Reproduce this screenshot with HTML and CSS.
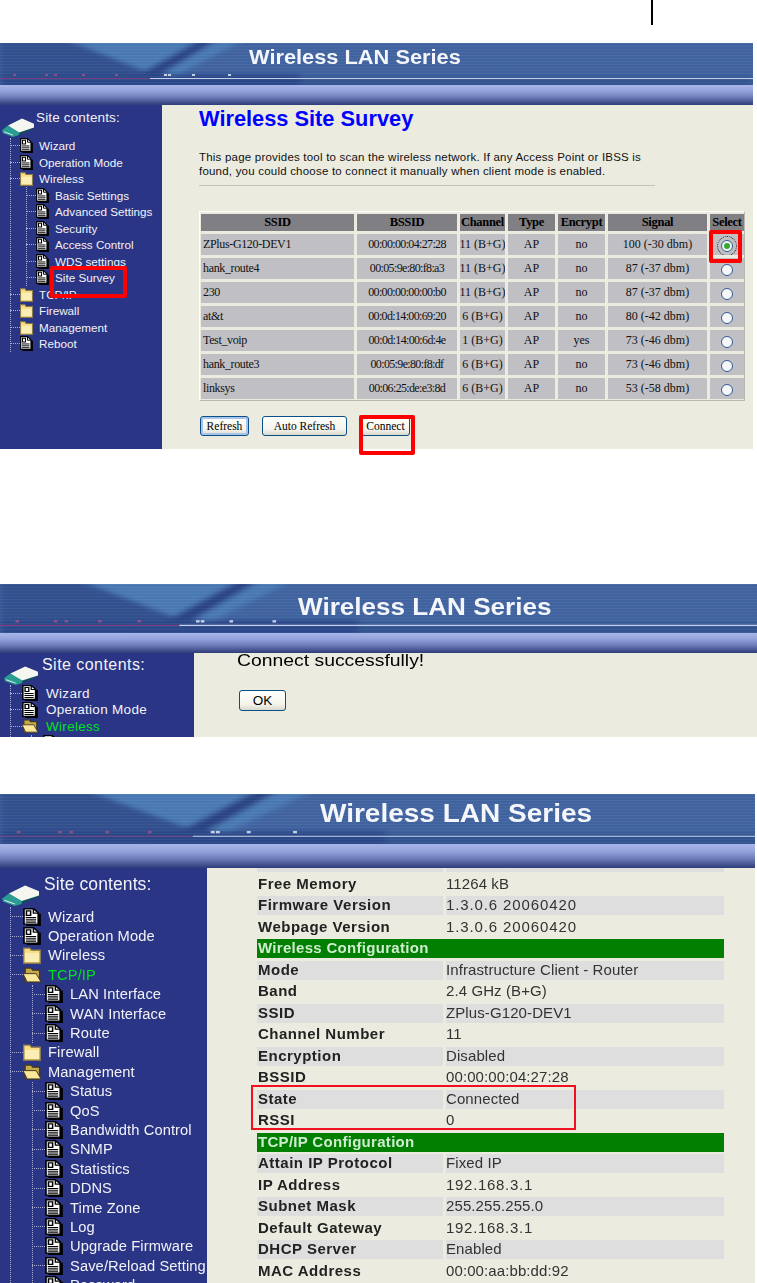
FILE: index.html
```html
<!DOCTYPE html>
<html>
<head>
    <meta charset="UTF-8">
    <meta name="viewport" content="width=device-width, initial-scale=1.0">
    <title>Wireless LAN Series</title>
    <link rel="stylesheet" href="styles.css">
</head>
<body>
    <svg class="sprites" width="0" height="0">
        <filter id="soft" x="-10%" y="-10%" width="120%" height="120%"><feGaussianBlur stdDeviation="3 2"/></filter>
        <symbol id="streaks" viewBox="0 0 753 42" preserveAspectRatio="none">
            <rect width="753" height="42" fill="#40639f"/>
            <g filter="url(#soft)">
                <path d="M40 -6H250L170 36H0Z" fill="#4878b3"/>
                <path d="M0 -6H60L150 30L110 44H0Z" fill="#32508e"/>
                <path d="M205 -6L140 31L158 33L222 -6Z" fill="#2b4283"/>
                <path d="M0 31H300V44H0Z" fill="#2c4688"/>
                <path d="M300 33H753V44H300Z" fill="#33538f"/>
            </g>
            <path d="M0 35.500H150" stroke="#7a3f80" stroke-width="1"/>
            <path d="M150 35.500H753" stroke="#c3d0e8" stroke-width="1"/>
            <g fill="#c4d0e8">
                <rect x="164" y="31" width="3" height="2"/><rect x="168" y="31" width="3" height="2"/>
                <rect x="192" y="31" width="3" height="2"/><rect x="228" y="31" width="3" height="2"/>
            </g>
            <g fill="#8a4f86">
                <rect x="13" y="31" width="3" height="2"/><rect x="45" y="31" width="3" height="2"/>
                <rect x="54" y="31" width="3" height="2"/><rect x="82" y="31" width="3" height="2"/>
                <rect x="115" y="31" width="3" height="2"/>
            </g>
        </symbol>
        <symbol id="drive" viewBox="0 0 32 20" preserveAspectRatio="none">
            <path d="M11 20L17 18L32 11V8.500L15 15.500Z" fill="#0c4f58"/>
            <path d="M6 8L20 .500L32 6V10L15 16Z" fill="#f6f6f0"/>
            <path d="M0 13L6 8L17 15V18L11 20L1 16Z" fill="#2b9c92"/>
            <path d="M2 14.500L11 18" stroke="#d6ece6" stroke-width="1"/>
        </symbol>
        <symbol id="doc" viewBox="0 0 13 16" preserveAspectRatio="none">
            <path d="M12 5V15.400H2.500" fill="none" stroke="#000" stroke-width="1.800"/>
            <path d="M.700 .700H7.500L11 4.200V14.300H.700Z" fill="#fff" stroke="#000" stroke-width="1.200"/>
            <path d="M7.500 1V4.500H11" fill="none" stroke="#000"/>
            <path d="M2.500 2.500H5.500V6.500H2.500Z" fill="#fff" stroke="#000" stroke-width="1.100"/>
            <path d="M2 8.500H9.500M2 10.500H9.500M2 12.500H9.500" stroke="#000"/>
        </symbol>
        <symbol id="folder" viewBox="0 0 13 13" preserveAspectRatio="none">
            <path d="M0.500 3V1.500H5L6 3H12.500V12.500H0.500Z" fill="#f8dc80" stroke="#8a7a50"/>
            <path d="M1.500 5H11.500V11.500H1.500Z" fill="#fbeeb4"/>
        </symbol>
        <symbol id="folder-open" viewBox="0 0 13 13" preserveAspectRatio="none">
            <path d="M1.500 3V1.500H6L7 3H12V11.500H1.500Z" fill="#c7a94a" stroke="#3f3a20"/>
            <path d="M0 5.500H9.500L13 11.500H3Z" fill="#fbe79a" stroke="#3f3a20" stroke-width=".7"/>
        </symbol>
    </svg>

    <div class="page-rule"></div>

    <!-- site survey -->
    <section class="shot shot-a">
        <div class="banner">
            <svg class="streaks"><use href="#streaks"/></svg>
            <div class="banner-title">Wireless LAN Series</div>
        </div>
        <div class="bar"></div>
        <div class="shot-body">
            <aside class="side">
                <div class="side-head">
                    <svg class="drive"><use href="#drive"/></svg>
                    <span>Site contents:</span>
                </div>
                <ul class="tree">
                    <li><div class="node"><i class="twig"></i><svg class="ico"><use href="#doc"/></svg>Wizard</div></li>
                    <li><div class="node"><i class="twig"></i><svg class="ico"><use href="#doc"/></svg>Operation Mode</div></li>
                    <li><div class="node"><i class="twig"></i><svg class="ico"><use href="#folder"/></svg>Wireless</div>
                        <ul class="tree sub">
                            <li><div class="node"><i class="twig"></i><svg class="ico"><use href="#doc"/></svg>Basic Settings</div></li>
                            <li><div class="node"><i class="twig"></i><svg class="ico"><use href="#doc"/></svg>Advanced Settings</div></li>
                            <li><div class="node"><i class="twig"></i><svg class="ico"><use href="#doc"/></svg>Security</div></li>
                            <li><div class="node"><i class="twig"></i><svg class="ico"><use href="#doc"/></svg>Access Control</div></li>
                            <li><div class="node"><i class="twig"></i><svg class="ico"><use href="#doc"/></svg>WDS settings</div></li>
                            <li><div class="node"><i class="twig"></i><svg class="ico"><use href="#doc"/></svg>Site Survey</div></li>
                        </ul>
                    </li>
                    <li><div class="node"><i class="twig"></i><svg class="ico"><use href="#folder"/></svg>TCP/IP</div></li>
                    <li><div class="node"><i class="twig"></i><svg class="ico"><use href="#folder"/></svg>Firewall</div></li>
                    <li><div class="node"><i class="twig"></i><svg class="ico"><use href="#folder"/></svg>Management</div></li>
                    <li><div class="node"><i class="twig"></i><svg class="ico"><use href="#doc"/></svg>Reboot</div></li>
                </ul>
            </aside>
            <main class="main survey-main">
                <h1 class="survey-title">Wireless Site Survey</h1>
                <p class="survey-text">This page provides tool to scan the wireless network. If any Access Point or IBSS is<br>found, you could choose to connect it manually when client mode is enabled.</p>
                <div class="survey-rule"></div>
                <div class="survey">
                    <div class="th">SSID</div><div class="th">BSSID</div><div class="th">Channel</div><div class="th">Type</div><div class="th">Encrypt</div><div class="th">Signal</div><div class="th">Select</div>

                    <div class="td left">ZPlus-G120-DEV1</div><div class="td mac">00:00:00:04:27:28</div><div class="td">11 (B+G)</div><div class="td">AP</div><div class="td">no</div><div class="td">100 (-30 dbm)</div><div class="td"><span class="radio focus"><i class="radio-dot"></i></span></div>

                    <div class="td left">hank_route4</div><div class="td mac">00:05:9e:80:f8:a3</div><div class="td">11 (B+G)</div><div class="td">AP</div><div class="td">no</div><div class="td">87 (-37 dbm)</div><div class="td"><span class="radio"></span></div>

                    <div class="td left">230</div><div class="td mac">00:00:00:00:00:b0</div><div class="td">11 (B+G)</div><div class="td">AP</div><div class="td">no</div><div class="td">87 (-37 dbm)</div><div class="td"><span class="radio"></span></div>

                    <div class="td left">at&amp;t</div><div class="td mac">00:0d:14:00:69:20</div><div class="td">6 (B+G)</div><div class="td">AP</div><div class="td">no</div><div class="td">80 (-42 dbm)</div><div class="td"><span class="radio"></span></div>

                    <div class="td left">Test_voip</div><div class="td mac">00:0d:14:00:6d:4e</div><div class="td">1 (B+G)</div><div class="td">AP</div><div class="td">yes</div><div class="td">73 (-46 dbm)</div><div class="td"><span class="radio"></span></div>

                    <div class="td left">hank_route3</div><div class="td mac">00:05:9e:80:f8:df</div><div class="td">6 (B+G)</div><div class="td">AP</div><div class="td">no</div><div class="td">73 (-46 dbm)</div><div class="td"><span class="radio"></span></div>

                    <div class="td left">linksys</div><div class="td mac">00:06:25:de:e3:8d</div><div class="td">6 (B+G)</div><div class="td">AP</div><div class="td">no</div><div class="td">53 (-58 dbm)</div><div class="td"><span class="radio"></span></div>
                </div>
                <div class="survey-actions">
                    <button class="btn btn-refresh btn-default">Refresh</button>
                    <button class="btn btn-auto">Auto Refresh</button>
                    <button class="btn btn-connect">Connect</button>
                </div>
            </main>
        </div>
        <div class="mark mark-site"></div>
        <div class="mark mark-select"></div>
        <div class="mark mark-connect"></div>
    </section>

    <!-- connect ok -->
    <section class="shot shot-b">
        <div class="banner">
            <svg class="streaks"><use href="#streaks"/></svg>
            <div class="banner-title">Wireless LAN Series</div>
        </div>
        <div class="bar"></div>
        <div class="shot-body">
            <aside class="side">
                <div class="side-head">
                    <svg class="drive"><use href="#drive"/></svg>
                    <span>Site contents:</span>
                </div>
                <ul class="tree">
                    <li><div class="node"><i class="twig"></i><svg class="ico"><use href="#doc"/></svg>Wizard</div></li>
                    <li><div class="node"><i class="twig"></i><svg class="ico"><use href="#doc"/></svg>Operation Mode</div></li>
                    <li><div class="node active"><i class="twig"></i><svg class="ico"><use href="#folder-open"/></svg>Wireless</div>
                        <ul class="tree sub">
                            <li><div class="node"><i class="twig"></i><svg class="ico"><use href="#doc"/></svg></div></li>
                        </ul>
                    </li>
                </ul>
            </aside>
            <main class="main ok-main">
                <div class="ok-text">Connect successfully!</div>
                <button class="btn btn-ok">OK</button>
            </main>
        </div>
    </section>

    <!-- status page -->
    <section class="shot shot-c">
        <div class="banner">
            <svg class="streaks"><use href="#streaks"/></svg>
            <div class="banner-title">Wireless LAN Series</div>
        </div>
        <div class="bar"></div>
        <div class="shot-body">
            <aside class="side">
                <div class="side-head">
                    <svg class="drive"><use href="#drive"/></svg>
                    <span>Site contents:</span>
                </div>
                <ul class="tree">
                    <li><div class="node"><i class="twig"></i><svg class="ico"><use href="#doc"/></svg>Wizard</div></li>
                    <li><div class="node"><i class="twig"></i><svg class="ico"><use href="#doc"/></svg>Operation Mode</div></li>
                    <li><div class="node"><i class="twig"></i><svg class="ico"><use href="#folder"/></svg>Wireless</div></li>
                    <li><div class="node active"><i class="twig"></i><svg class="ico"><use href="#folder-open"/></svg>TCP/IP</div>
                        <ul class="tree sub">
                            <li><div class="node"><i class="twig"></i><svg class="ico"><use href="#doc"/></svg>LAN Interface</div></li>
                            <li><div class="node"><i class="twig"></i><svg class="ico"><use href="#doc"/></svg>WAN Interface</div></li>
                            <li><div class="node"><i class="twig"></i><svg class="ico"><use href="#doc"/></svg>Route</div></li>
                        </ul>
                    </li>
                    <li><div class="node"><i class="twig"></i><svg class="ico"><use href="#folder"/></svg>Firewall</div></li>
                    <li><div class="node"><i class="twig"></i><svg class="ico"><use href="#folder-open"/></svg>Management</div>
                        <ul class="tree sub">
                            <li><div class="node"><i class="twig"></i><svg class="ico"><use href="#doc"/></svg>Status</div></li>
                            <li><div class="node"><i class="twig"></i><svg class="ico"><use href="#doc"/></svg>QoS</div></li>
                            <li><div class="node"><i class="twig"></i><svg class="ico"><use href="#doc"/></svg>Bandwidth Control</div></li>
                            <li><div class="node"><i class="twig"></i><svg class="ico"><use href="#doc"/></svg>SNMP</div></li>
                            <li><div class="node"><i class="twig"></i><svg class="ico"><use href="#doc"/></svg>Statistics</div></li>
                            <li><div class="node"><i class="twig"></i><svg class="ico"><use href="#doc"/></svg>DDNS</div></li>
                            <li><div class="node"><i class="twig"></i><svg class="ico"><use href="#doc"/></svg>Time Zone</div></li>
                            <li><div class="node"><i class="twig"></i><svg class="ico"><use href="#doc"/></svg>Log</div></li>
                            <li><div class="node"><i class="twig"></i><svg class="ico"><use href="#doc"/></svg>Upgrade Firmware</div></li>
                            <li><div class="node"><i class="twig"></i><svg class="ico"><use href="#doc"/></svg>Save/Reload Setting</div></li>
                            <li><div class="node"><i class="twig"></i><svg class="ico"><use href="#doc"/></svg>Password</div></li>
                        </ul>
                    </li>
                </ul>
            </aside>
            <main class="main status-main">
                <div class="info info-cut"><div class="info-k"></div><div class="info-v"></div></div>
                <div class="info plain"><div class="info-k">Free Memory</div><div class="info-v">11264 kB</div></div>
                <div class="info"><div class="info-k">Firmware Version</div><div class="info-v wide">1.3.0.6 20060420</div></div>
                <div class="info plain"><div class="info-k">Webpage Version</div><div class="info-v wide">1.3.0.6 20060420</div></div>
                <div class="info-head">Wireless Configuration</div>
                <div class="info"><div class="info-k">Mode</div><div class="info-v">Infrastructure Client - Router</div></div>
                <div class="info plain"><div class="info-k">Band</div><div class="info-v">2.4 GHz (B+G)</div></div>
                <div class="info"><div class="info-k">SSID</div><div class="info-v">ZPlus-G120-DEV1</div></div>
                <div class="info plain"><div class="info-k">Channel Number</div><div class="info-v">11</div></div>
                <div class="info"><div class="info-k">Encryption</div><div class="info-v">Disabled</div></div>
                <div class="info plain"><div class="info-k">BSSID</div><div class="info-v">00:00:00:04:27:28</div></div>
                <div class="info"><div class="info-k">State</div><div class="info-v">Connected</div></div>
                <div class="info plain"><div class="info-k">RSSI</div><div class="info-v">0</div></div>
                <div class="info-head">TCP/IP Configuration</div>
                <div class="info"><div class="info-k">Attain IP Protocol</div><div class="info-v">Fixed IP</div></div>
                <div class="info plain"><div class="info-k">IP Address</div><div class="info-v ip">192.168.3.1</div></div>
                <div class="info"><div class="info-k">Subnet Mask</div><div class="info-v">255.255.255.0</div></div>
                <div class="info plain"><div class="info-k">Default Gateway</div><div class="info-v ip">192.168.3.1</div></div>
                <div class="info"><div class="info-k">DHCP Server</div><div class="info-v">Enabled</div></div>
                <div class="info plain"><div class="info-k">MAC Address</div><div class="info-v">00:00:aa:bb:dd:92</div></div>
                <div class="info-head"></div>
            </main>
        </div>
        <div class="mark mark-state"></div>
    </section>
</body>
</html>
```

FILE: styles.css
```css
body {
    margin: 0;
    background-color: #fff;
    font-family: "Liberation Sans", Arial, sans-serif;
    overflow-x: hidden;
}

.sprites {
    position: absolute;
}

.page-rule {
    width: 2px;
    height: 25px;
    margin-left: 651px;
    margin-bottom: 18px;
    background-color: #000;
}

/* each screenshot sets its own scale */
.shot {
    position: relative;
    --banner-h: 42px;
    --bar-h: 20px;
    --streak-w: 753px;
    --side-w: 162px;
    --step: 16.5px;
    --twig: 10px;
    --ico: 13px;
    --ico-h: 15px;
    --gap: 6px;
    --sub-in: 15px;
    --label: 11.7px;
    --label-sp: 0;
}

.shot-a {
    width: 753px;
    height: 406px;
}

.shot-b {
    width: 757px;
    height: 153px;
    margin-top: 135px;
    overflow: hidden;
    --banner-h: 49px;
    --bar-h: 20px;
    --streak-w: 900px;
    --side-w: 194px;
    --twig: 12px;
    --ico: 16px;
    --ico-h: 16px;
    --gap: 8px;
    --sub-in: 20px;
    --label: 13.5px;
    --label-sp: .3px;
}

.shot-c {
    width: 755px;
    height: 489px;
    margin-top: 57px;
    overflow: hidden;
    --banner-h: 50px;
    --bar-h: 24px;
    --streak-w: 968px;
    --side-w: 207px;
    --step: 19.4px;
    --twig: 13px;
    --ico: 18px;
    --ico-h: 18px;
    --gap: 7px;
    --sub-in: 21px;
    --label: 14.7px;
    --label-sp: .1px;
}

.banner {
    position: relative;
    height: var(--banner-h);
    overflow: hidden;
    background-color: #40639f;
}

.banner::after {
    content: "";
    position: absolute;
    inset: 0;
    background-image: repeating-linear-gradient(180deg, rgba(255,255,255,.05) 0, rgba(255,255,255,.05) 1px, transparent 1px, transparent 3px);
}

.streaks {
    position: absolute;
    left: 0;
    top: 0;
    width: var(--streak-w);
    height: 100%;
}

.banner-title {
    position: absolute;
    z-index: 1;
    color: #f4f6fb;
    font-weight: bold;
    white-space: nowrap;
    transform-origin: left center;
}

.shot-a .banner-title {
    left: 249px;
    top: 3px;
    font-size: 20px;
    line-height: 22px;
    transform: scaleX(1.09);
}

.shot-b .banner-title {
    left: 298px;
    top: 10px;
    font-size: 23px;
    line-height: 26px;
    transform: scaleX(1.134);
}

.shot-c .banner-title {
    left: 320px;
    top: 5px;
    font-size: 25px;
    line-height: 28px;
    transform: scaleX(1.12);
}

.bar {
    height: var(--bar-h);
    background: linear-gradient(180deg, #a9b6ea 0%, #93a3dc 30%, #6c7cb8 62%, #3d4c88 90%, #2f3d78 100%);
}

.shot-body {
    display: flex;
    height: calc(100% - var(--banner-h) - var(--bar-h));
}

.side {
    flex: 0 0 var(--side-w);
    width: var(--side-w);
    overflow: hidden;
    background-color: #2a3585;
    color: #f2f2f6;
    font-size: var(--label);
    letter-spacing: var(--label-sp);
}

.side-head {
    display: flex;
    align-items: flex-start;
}

.shot-a .side-head {
    height: 32.6px;
    padding-left: 2px;
    gap: 2px;
    font-size: 13.5px;
    letter-spacing: .15px;
}

.shot-a .side-head span {
    margin-top: 5px;
    line-height: 16px;
}

.drive {
    width: 32px;
    height: 19px;
    margin-top: 13px;
}

.shot-b .side-head {
    height: 32px;
    padding-left: 4px;
    gap: 4px;
    font-size: 16px;
    letter-spacing: .45px;
}

.shot-b .side-head span {
    margin-top: 3px;
    line-height: 18px;
}

.shot-b .drive {
    width: 34px;
    margin-top: 13px;
}

.shot-c .side-head {
    height: 39px;
    padding-left: 2px;
    gap: 5px;
    font-size: 17.5px;
    letter-spacing: .1px;
}

.shot-c .side-head span {
    margin-top: 5px;
    line-height: 22px;
}

.shot-c .drive {
    width: 37px;
    height: 21px;
    margin-top: 17px;
}

.shot-c .shot-body {
    filter: blur(.35px);
}

.tree {
    list-style: none;
    margin: 0 0 0 10px;
    padding: 0;
    border-left: 1px dotted #a7acd0;
}

.tree.sub {
    margin-left: var(--sub-in);
}

.node {
    display: flex;
    align-items: center;
    height: var(--step);
    white-space: nowrap;
    margin-left: -1px;
}

.node.active {
    color: #00e020;
}

.twig {
    flex: 0 0 var(--twig);
    width: var(--twig);
    border-top: 1px dotted #a7acd0;
}

.ico {
    flex: 0 0 var(--ico);
    width: var(--ico);
    height: var(--ico-h);
    margin-right: var(--gap);
}

.main {
    flex: 1;
    background-color: #ebebe0;
    overflow: hidden;
}

.survey-main {
    padding: 1px 0 0 37px;
}

.survey-title {
    margin: 0;
    color: #0000ff;
    font-size: 21.8px;
    line-height: 25px;
}

.survey-text {
    margin: 19px 0 0;
    font-size: 11.5px;
    line-height: 14px;
    letter-spacing: .21px;
    color: #111;
}

.survey-rule {
    width: 456px;
    height: 1px;
    margin-top: 7px;
    background-color: #c4c4bc;
}

.survey {
    display: grid;
    grid-template-columns: 153px 100px 45px 47px 47px 99px 34px;
    grid-template-rows: 17px repeat(7, 21px);
    gap: 3px;
    box-sizing: border-box;
    width: 546px;
    margin-top: 25px;
    padding: 2px 1px 1px;
    border: 1px solid #fff;
    border-right-color: #b8b8b0;
    border-bottom-color: #b8b8b0;
    font-family: "Liberation Serif", "Times New Roman", serif;
    font-size: 12px;
    color: #111;
}

.th,
.td {
    display: flex;
    align-items: center;
    justify-content: center;
    white-space: nowrap;
    overflow: hidden;
}

.th {
    background-color: #807f84;
    font-weight: bold;
    font-size: 12.5px;
    letter-spacing: -.3px;
    color: #000;
}

.td {
    background-color: #c0bfc4;
}

.td.left {
    justify-content: flex-start;
    padding-left: 2px;
    letter-spacing: -.35px;
}

.td.mac {
    letter-spacing: -.65px;
}

.radio {
    position: relative;
    box-sizing: border-box;
    display: block;
    width: 12px;
    height: 12px;
    margin-top: 3px;
    border: 1px solid #2f5f95;
    border-radius: 50%;
    background-color: #f6f6f6;
}

.radio.focus {
    outline: 1px dotted #222;
    outline-offset: 3px;
}

.radio-dot {
    position: absolute;
    left: 2px;
    top: 2px;
    width: 6px;
    height: 6px;
    border-radius: 50%;
    background-color: #35a830;
}

.survey-actions {
    display: flex;
    margin-top: 15px;
}

.btn {
    box-sizing: border-box;
    height: 20px;
    padding: 0;
    border: 1px solid #0a4f86;
    border-radius: 3px;
    background: linear-gradient(180deg, #fff 0%, #f4f4ec 70%, #d8d8cc 100%);
    font-family: "Liberation Serif", "Times New Roman", serif;
    font-size: 11.5px;
    color: #000;
}

.btn-default {
    box-shadow: inset 0 0 0 2px #a9c4ea;
}

.btn-refresh {
    width: 49px;
    margin-left: 1px;
}

.btn-auto {
    width: 85px;
    margin-left: 13px;
}

.btn-connect {
    width: 49px;
    margin-left: 14px;
}

.ok-main {
    padding-left: 43px;
}

.ok-text {
    font-size: 16px;
    line-height: 16px;
    color: #000;
    white-space: nowrap;
    transform-origin: left center;
    transform: scaleX(1.21);
}

.btn-ok {
    display: block;
    width: 47px;
    height: 21px;
    margin: 21px 0 0 2px;
    font-family: "Liberation Sans", Arial, sans-serif;
    font-size: 13.5px;
}

.status-main {
    padding-left: 50px;
}

.info {
    display: grid;
    grid-template-columns: 186px 278px;
    gap: 3px;
    width: 467px;
    height: 19px;
    margin-bottom: 2.5px;
    font-size: 15px;
    line-height: 17px;
    color: #333;
}

.info-k,
.info-v {
    background-color: #dedede;
    white-space: nowrap;
}

.info-k {
    padding-left: 1px;
    font-weight: bold;
    letter-spacing: .5px;
    color: #222;
}

.info-v {
    letter-spacing: .1px;
}

.info-v.wide {
    letter-spacing: .88px;
}

.info-v.ip {
    letter-spacing: .7px;
}

.info.plain .info-k,
.info.plain .info-v {
    background-color: transparent;
}

.info.info-cut {
    height: 4px;
}

.info-head {
    width: 467px;
    height: 19px;
    margin-bottom: 2.5px;
    padding-left: 1px;
    box-sizing: border-box;
    background-color: #007f00;
    color: #cfeccf;
    font-size: 15px;
    font-weight: bold;
    letter-spacing: .3px;
    line-height: 17px;
}

/* red marks drawn on top of the screenshots */
.mark {
    position: absolute;
    box-sizing: border-box;
    border: 4px solid #f00;
    border-radius: 2px;
}

.mark-site {
    left: 50px;
    top: 223px;
    width: 77px;
    height: 32px;
}

.mark-select {
    left: 709px;
    top: 187px;
    width: 33px;
    height: 33px;
}

.mark-connect {
    left: 359px;
    top: 372px;
    width: 56px;
    height: 40px;
}

.mark-state {
    left: 251px;
    top: 291px;
    width: 325px;
    height: 45px;
    border-width: 2px;
    border-radius: 0;
    border-color: #f01020;
}
```
